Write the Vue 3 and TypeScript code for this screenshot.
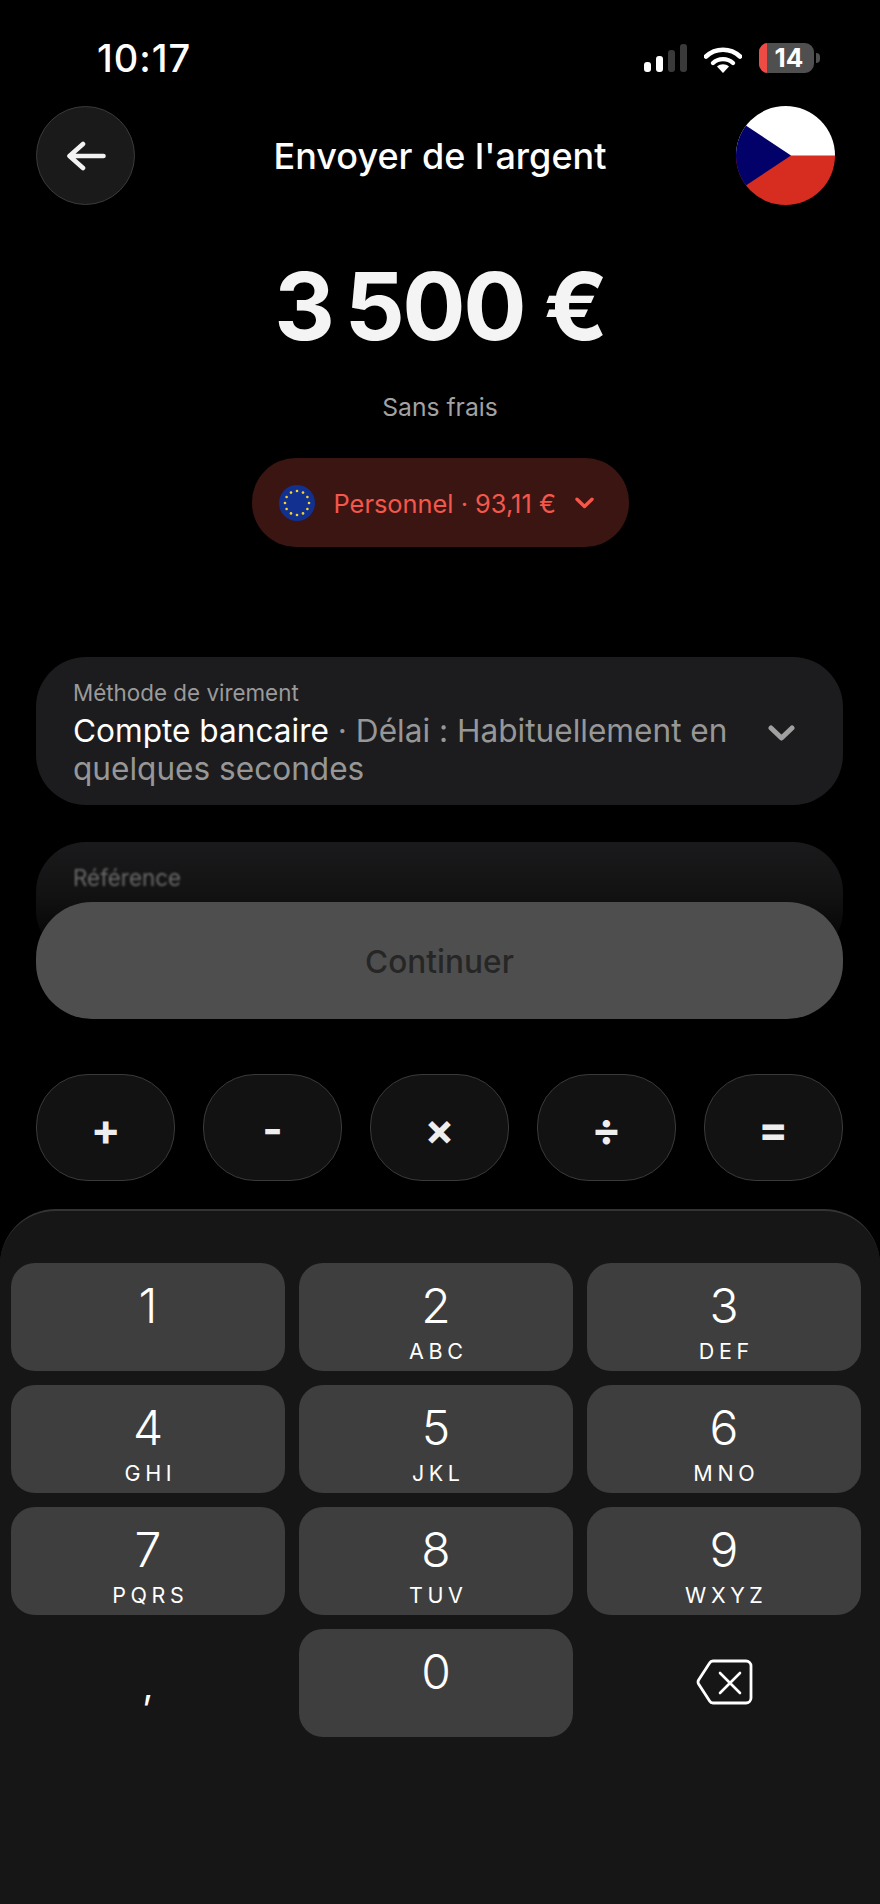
<script setup lang="ts">
const stars = Array.from({ length: 12 }, (_, i) => {
  const a = (i * Math.PI) / 6
  return { x: 18 + 12 * Math.sin(a), y: 18 - 12 * Math.cos(a) }
})
const ops = ['+', '-', '×', '÷', '=']
const keys = [
  { d: '1', l: '' },
  { d: '2', l: 'ABC' },
  { d: '3', l: 'DEF' },
  { d: '4', l: 'GHI' },
  { d: '5', l: 'JKL' },
  { d: '6', l: 'MNO' },
  { d: '7', l: 'PQRS' },
  { d: '8', l: 'TUV' },
  { d: '9', l: 'WXYZ' },
]
</script>

<template>
  <div class="page">
    <div class="status">
      <span class="time">10:17</span>
      <div class="status-icons">
        <svg class="signal" width="43" height="28" viewBox="0 0 43 28">
          <rect x="0" y="18" width="7" height="10" rx="3" fill="#fff" />
          <rect x="12" y="12" width="7" height="16" rx="3" fill="#fff" />
          <rect x="24" y="6" width="7" height="22" rx="3" fill="#3a3a3a" />
          <rect x="36" y="0" width="7" height="28" rx="3" fill="#3a3a3a" />
        </svg>
        <svg class="wifi" width="38" height="27" viewBox="0 0 38 27">
          <path d="M2 10.5C11.5 1.5 26.5 1.5 36 10.5" fill="none" stroke="#fff" stroke-width="4.6" stroke-linecap="round" />
          <path d="M9 17C14.5 11.8 23.5 11.8 29 17" fill="none" stroke="#fff" stroke-width="4.4" stroke-linecap="round" />
          <path d="M13 20.6C16.5 17.6 21.5 17.6 25 20.6L19 27Z" fill="#fff" />
        </svg>
        <div class="battery">
          <div class="battery-body">
            <span class="battery-low"></span>
            <span class="battery-num">14</span>
          </div>
          <span class="battery-nub"></span>
        </div>
      </div>
    </div>

    <div class="header">
      <button class="back">
        <svg width="40" height="30" viewBox="0 0 40 30">
          <path d="M37.5 15H4M17 3 3.5 15 17 27" fill="none" stroke="#f2f2f2" stroke-width="4.6" stroke-linecap="round" stroke-linejoin="round" />
        </svg>
      </button>
      <div class="title">Envoyer de l'argent</div>
      <svg class="flag" width="99" height="99" viewBox="0 0 99 99">
        <defs>
          <clipPath id="czc"><circle cx="49.5" cy="49.5" r="49.5" /></clipPath>
        </defs>
        <g clip-path="url(#czc)">
          <rect width="99" height="50" fill="#fff" />
          <rect y="49.5" width="99" height="50" fill="#d72d20" />
          <polygon points="0,13 55,49.5 0,86" fill="#02016a" />
        </g>
      </svg>
    </div>

    <div class="amount">3&#8201;500&nbsp;€</div>
    <div class="fees">Sans frais</div>

    <div class="pill-row">
      <div class="pill">
        <svg class="eu" width="36" height="36" viewBox="0 0 36 36">
          <circle cx="18" cy="18" r="18" fill="#12308f" />
          <circle v-for="(s, i) in stars" :key="i" :cx="s.x" :cy="s.y" r="1.3" fill="#f5d327" />
        </svg>
        <span class="pill-text">Personnel · 93,11 €</span>
        <svg class="pill-chev" width="19" height="12" viewBox="0 0 19 12">
          <path d="M2 2.2 9.5 9.5 17 2.2" fill="none" stroke="#f4574b" stroke-width="3.4" stroke-linecap="round" stroke-linejoin="round" />
        </svg>
      </div>
    </div>

    <div class="card method">
      <div class="method-text">
        <div class="label">Méthode de virement</div>
        <div class="value"><span class="value-main">Compte bancaire</span> · Délai : Habituellement en quelques secondes</div>
      </div>
      <svg class="method-chev" width="27" height="16" viewBox="0 0 27 16">
        <path d="M3 3 13.5 13 24 3" fill="none" stroke="#a0a0a0" stroke-width="5" stroke-linecap="round" stroke-linejoin="round" />
      </svg>
    </div>

    <div class="stack">
      <div class="card reference">
        <div class="ref-label">Référence</div>
      </div>
      <button class="continue">Continuer</button>
    </div>

    <div class="ops">
      <div v-for="o in ops" :key="o" class="op">{{ o }}</div>
    </div>

    <div class="sheet">
      <div class="keys">
        <div v-for="k in keys" :key="k.d" class="key">
          <span class="digit">{{ k.d }}</span>
          <span class="letters">{{ k.l }}</span>
        </div>
        <div class="key plain"><span class="comma">,</span></div>
        <div class="key"><span class="digit">0</span></div>
        <div class="key plain">
          <svg class="del" width="57" height="48" viewBox="0 0 57 48">
            <path d="M17 3H50A5 5 0 0 1 55 8V40A5 5 0 0 1 50 45H17A4 4 0 0 1 13.6 43L2.6 26A4 4 0 0 1 2.6 22L13.6 5A4 4 0 0 1 17 3Z" fill="none" stroke="#fff" stroke-width="2.8" stroke-linejoin="round" />
            <path d="M24 15 44 35M44 15 24 35" fill="none" stroke="#fff" stroke-width="2.6" stroke-linecap="round" />
          </svg>
        </div>
      </div>
    </div>
  </div>
</template>

<style scoped>
.page {
  width: 880px;
  height: 1904px;
  background: #000;
  color: #fff;
  font-family: Inter, "Noto Sans", sans-serif;
  overflow: hidden;
  display: flex;
  flex-direction: column;
}
.status {
  height: 106px;
  padding: 0 60px 0 97px;
  display: flex;
  justify-content: space-between;
  align-items: flex-start;
  box-sizing: border-box;
}
.time {
  margin-top: 36px;
  font-size: 38px;
  line-height: 44px;
  font-weight: 500;
  letter-spacing: 1px;
}
.status-icons {
  display: flex;
  align-items: flex-start;
  margin-top: 43px;
}
.signal {
  margin-top: 1px;
}
.wifi {
  margin: 3px 0 0 17px;
}
.battery {
  display: flex;
  align-items: center;
  margin-left: 17px;
}
.battery-body {
  position: relative;
  width: 55px;
  height: 30px;
  background: #4f4f4f;
  border-radius: 9px;
  overflow: hidden;
  display: flex;
  align-items: center;
  justify-content: center;
}
.battery-low {
  position: absolute;
  left: 0;
  top: 0;
  bottom: 0;
  width: 8px;
  background: #ef4b45;
}
.battery-num {
  font-size: 26px;
  font-weight: 700;
  line-height: 30px;
  margin-left: 5px;
}
.battery-nub {
  width: 4px;
  height: 10px;
  margin-left: 2px;
  background: #4f4f4f;
  border-radius: 0 5px 5px 0;
}
.header {
  padding: 0 45px 0 36px;
  height: 99px;
  display: flex;
  align-items: center;
  justify-content: space-between;
}
.back {
  width: 99px;
  height: 99px;
  box-sizing: border-box;
  border-radius: 50%;
  background: #1a1a1a;
  border: 1.5px solid #3a3a3a;
  padding: 0;
  display: flex;
  align-items: center;
  justify-content: center;
}
.title {
  font-size: 36px;
  font-weight: 500;
  line-height: 44px;
  margin: 1px 0 0 9px;
}
.amount {
  margin-top: 47px;
  height: 109px;
  line-height: 109px;
  text-align: center;
  font-size: 94px;
  font-weight: 650;
  color: #f4f4f4;
  letter-spacing: -2.5px;
}
.fees {
  margin-top: 30px;
  text-align: center;
  font-size: 24.7px;
  line-height: 32px;
  color: #a2a2a2;
}
.pill-row {
  margin-top: 35px;
  display: flex;
  justify-content: center;
}
.pill {
  width: 377px;
  height: 89px;
  box-sizing: border-box;
  border-radius: 44px;
  background: #3b1512;
  padding-left: 27px;
  display: flex;
  align-items: center;
}
.pill-text {
  margin-left: 19px;
  padding-top: 1px;
  font-size: 25.4px;
  color: #f4574b;
  white-space: nowrap;
}
.pill-chev {
  margin-left: 19px;
}
.card {
  margin: 0 37px 0 36px;
  border-radius: 50px;
  background: #1c1c1e;
}
.method {
  margin-top: 110px;
  height: 148px;
  box-sizing: border-box;
  padding: 22px 48px 0 37px;
  display: flex;
  justify-content: space-between;
}
.method-text {
  width: 670px;
}
.label {
  font-size: 22.4px;
  line-height: 28px;
  color: #9a9a9a;
}
.value {
  font-size: 31.6px;
  line-height: 38px;
  color: #979797;
  margin-top: 5px;
  font-feature-settings: "calt" 0;
}
.value-main {
  color: #fff;
}
.method-chev {
  margin-top: 46px;
}
.stack {
  position: relative;
  margin-top: 37px;
  height: 177px;
}
.reference {
  height: 118px;
  box-sizing: border-box;
  padding: 22px 37px 0;
  background: linear-gradient(#1a1a1c 0%, #121213 45%, #000 100%);
}
.ref-label {
  font-size: 22.4px;
  line-height: 28px;
  color: #6a6a6a;
  filter: blur(1px);
}
.continue {
  position: absolute;
  left: 36px;
  top: 60px;
  width: 807px;
  height: 117px;
  border: 0;
  border-radius: 56px;
  background: #4e4e4f;
  color: #262626;
  font-family: inherit;
  font-size: 31.6px;
  font-weight: 500;
  padding-top: 2px;
}
.ops {
  margin-top: 55px;
  padding: 0 37px 0 36px;
  display: grid;
  grid-template-columns: repeat(5, 1fr);
  column-gap: 27.5px;
}
.op {
  height: 107px;
  box-sizing: border-box;
  border-radius: 52px;
  background: #121212;
  border: 1.5px solid #3a3a3a;
  display: flex;
  align-items: center;
  justify-content: center;
  padding-top: 2px;
  font-size: 44px;
  font-weight: 700;
  color: #eee;
}
.sheet {
  margin-top: 28px;
  flex: 1;
  background: #161616;
  border-top: 2px solid #333;
  border-radius: 56px 56px 0 0;
  padding: 52px 19px 0 11px;
}
.keys {
  display: grid;
  grid-template-columns: repeat(3, 1fr);
  gap: 14px;
}
.key {
  height: 108px;
  border-radius: 24px;
  background: #3e3e3e;
  display: flex;
  flex-direction: column;
  align-items: center;
}
.key.plain {
  background: transparent;
}
.digit {
  margin-top: 14px;
  font-size: 48px;
  font-weight: 350;
  line-height: 58px;
  height: 58px;
}
.letters {
  margin-top: 3px;
  font-size: 21.5px;
  line-height: 26px;
  font-weight: 400;
  letter-spacing: 4.6px;
  padding-left: 4.6px;
}
.comma {
  margin-top: 33px;
  font-size: 38px;
  line-height: 46px;
}
.del {
  margin-top: 29px;
}
</style>
